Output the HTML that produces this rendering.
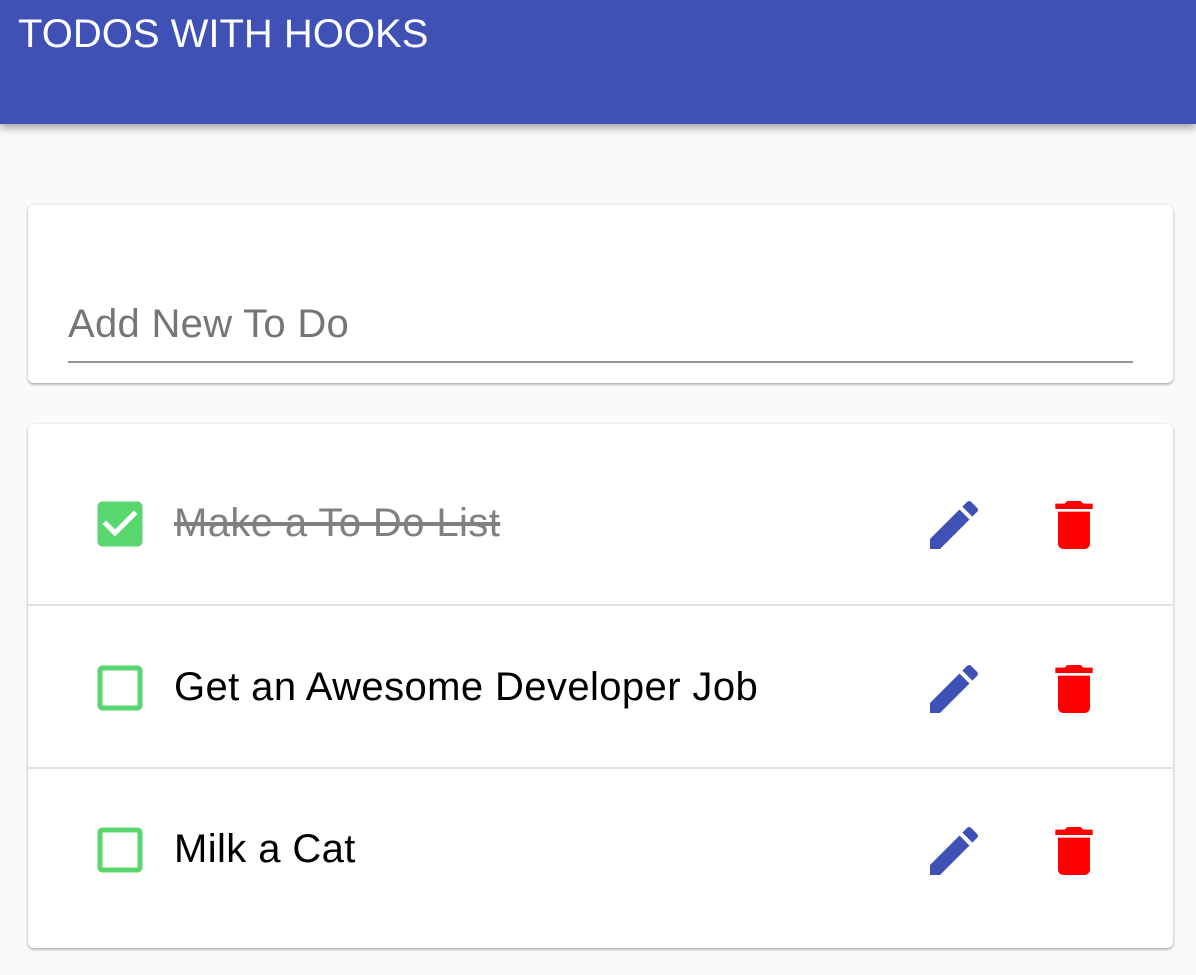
<!DOCTYPE html>
<html><head><style>
body{margin:0;width:1196px;height:975px;background:#fafafa;font-family:"Liberation Sans",Arial,sans-serif;position:relative;overflow:hidden}
.hdr{position:absolute;left:0;top:0;width:1196px;height:124px;background:#3f51b5;box-shadow:0 4px 8px rgba(0,0,0,.35)}
.hdr span{position:absolute;left:18px;top:11px;color:#fff;font-size:40px;line-height:46px}
.card{position:absolute;left:28px;width:1145px;background:#fff;border-radius:6px;box-shadow:0 1px 3px rgba(0,0,0,.25),0 2px 2px rgba(0,0,0,.12)}
.inp{position:absolute;left:40px;top:96px;font-size:40px;line-height:46px;color:#757575;letter-spacing:.3px}
.ul{position:absolute;left:40px;top:156px;width:1065px;height:2px;background:#949494}
.row{position:absolute;left:0;width:1145px;height:162px}
.div{position:absolute;left:0;width:1145px;height:2px;background:#e0e0e0}
.row .t{position:absolute;left:146px;top:59px;font-size:40px;line-height:44px;color:#000;letter-spacing:.4px}
.row svg{position:absolute;top:51px}
.row svg.cb{top:52px}
</style></head><body>
<div class="hdr"><span>TODOS WITH HOOKS</span></div>
<div class="card" style="top:205px;height:178px"><div class="inp">Add New To Do</div><div class="ul"></div></div>
<div class="card" style="top:424px;height:524px">
 <div class="row" style="top:18px">
  <svg class="cb" style="left:62px" width="60" height="60" viewBox="0 0 24 24"><path fill="#5ad66f" d="M19 3H5c-1.11 0-2 .9-2 2v14c0 1.1.89 2 2 2h14c1.11 0 2-.9 2-2V5c0-1.1-.89-2-2-2zm-9 14l-5-5 1.41-1.41L10 14.17l7.59-7.59L19 8l-9 9z"/></svg>
  <div class="t" style="color:#808080;text-decoration:line-through">Make a To Do List</div>
  <svg style="left:894px" width="64" height="64" viewBox="0 0 24 24"><path fill="#3f51b5" d="M3 17.25V21h3.75L17.81 9.94l-3.75-3.75L3 17.25zM20.71 7.04c.39-.39.39-1.02 0-1.41l-2.34-2.34a.996.996 0 00-1.41 0l-1.83 1.83 3.75 3.75 1.83-1.830z"/></svg>
  <svg style="left:1014px" width="64" height="64" viewBox="0 0 24 24"><path fill="#ff0000" d="M6 19c0 1.1.9 2 2 2h8c1.1 0 2-.9 2-2V7H6v12zM19 4h-3.5l-1-1h-5l-1 1H5v2h14V4z"/></svg>
 </div>
 <div class="div" style="top:180px"></div>
 <div class="row" style="top:182px">
  <svg class="cb" style="left:62px" width="60" height="60" viewBox="0 0 24 24"><path fill="#5ad66f" d="M19 5v14H5V5h14m0-2H5c-1.1 0-2 .9-2 2v14c0 1.1.9 2 2 2h14c1.1 0 2-.9 2-2V5c0-1.1-.9-2-2-2z"/></svg>
  <div class="t">Get an Awesome Developer Job</div>
  <svg style="left:894px" width="64" height="64" viewBox="0 0 24 24"><path fill="#3f51b5" d="M3 17.25V21h3.75L17.81 9.94l-3.75-3.75L3 17.25zM20.71 7.04c.39-.39.39-1.02 0-1.41l-2.34-2.34a.996.996 0 00-1.41 0l-1.83 1.83 3.75 3.75 1.83-1.830z"/></svg>
  <svg style="left:1014px" width="64" height="64" viewBox="0 0 24 24"><path fill="#ff0000" d="M6 19c0 1.1.9 2 2 2h8c1.1 0 2-.9 2-2V7H6v12zM19 4h-3.5l-1-1h-5l-1 1H5v2h14V4z"/></svg>
 </div>
 <div class="div" style="top:343px"></div>
 <div class="row" style="top:344px">
  <svg class="cb" style="left:62px" width="60" height="60" viewBox="0 0 24 24"><path fill="#5ad66f" d="M19 5v14H5V5h14m0-2H5c-1.1 0-2 .9-2 2v14c0 1.1.9 2 2 2h14c1.1 0 2-.9 2-2V5c0-1.1-.9-2-2-2z"/></svg>
  <div class="t">Milk a Cat</div>
  <svg style="left:894px" width="64" height="64" viewBox="0 0 24 24"><path fill="#3f51b5" d="M3 17.25V21h3.75L17.81 9.94l-3.75-3.75L3 17.25zM20.71 7.04c.39-.39.39-1.02 0-1.41l-2.34-2.34a.996.996 0 00-1.41 0l-1.83 1.83 3.75 3.75 1.83-1.830z"/></svg>
  <svg style="left:1014px" width="64" height="64" viewBox="0 0 24 24"><path fill="#ff0000" d="M6 19c0 1.1.9 2 2 2h8c1.1 0 2-.9 2-2V7H6v12zM19 4h-3.5l-1-1h-5l-1 1H5v2h14V4z"/></svg>
 </div>
</div>
</body></html>
